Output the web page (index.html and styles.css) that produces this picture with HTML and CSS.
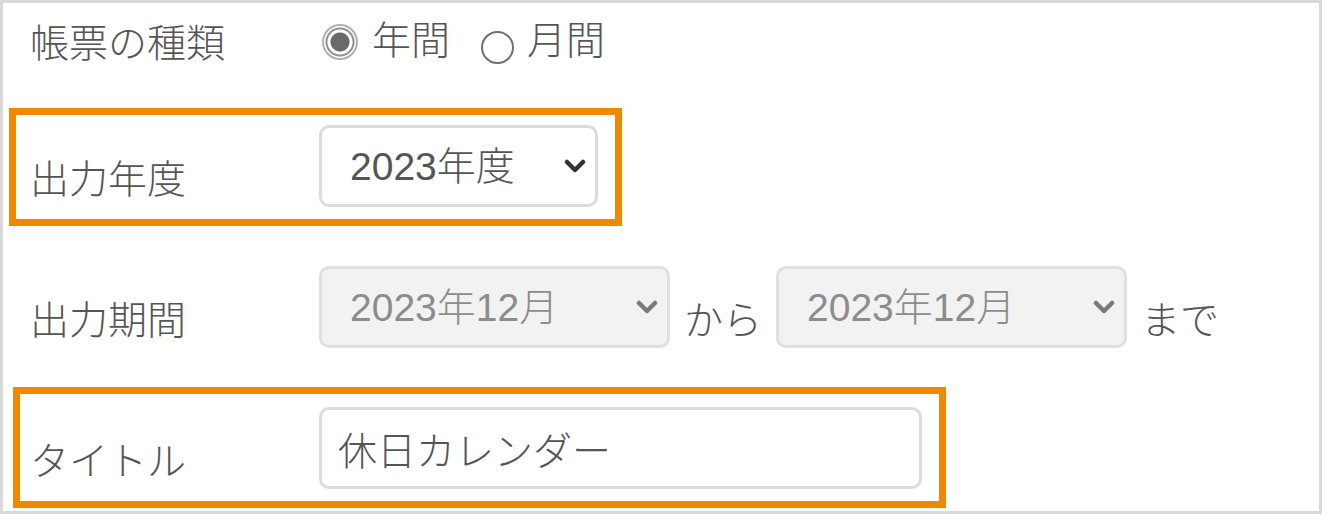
FILE: index.html
```html
<!DOCTYPE html>
<html lang="ja">
<head>
<meta charset="utf-8">
<title>帳票出力</title>
<link rel="stylesheet" href="styles.css">
</head>
<body>
<div class="frame">
  <div class="row row-type">
    <div class="label">帳票の種類</div>
    <div class="radios">
      <label class="radio"><input type="radio" name="kind" checked><span>年間</span></label>
      <label class="radio radio-off"><input type="radio" name="kind"><span>月間</span></label>
    </div>
  </div>

  <div class="row row-year">
    <div class="label">出力年度</div>
    <div class="select select-year">
      <select><option>2023年度</option></select>
      <svg class="chev" viewBox="0 0 22 14" width="22" height="14"><path d="M3 3 L11 11 L19 3"/></svg>
    </div>
  </div>

  <div class="row row-period">
    <div class="label">出力期間</div>
    <div class="select select-month is-disabled">
      <select disabled><option>2023年12月</option></select>
      <svg class="chev" viewBox="0 0 22 14" width="22" height="14"><path d="M3 3 L11 11 L19 3"/></svg>
    </div>
    <span class="word">から</span>
    <div class="select select-month is-disabled">
      <select disabled><option>2023年12月</option></select>
      <svg class="chev" viewBox="0 0 22 14" width="22" height="14"><path d="M3 3 L11 11 L19 3"/></svg>
    </div>
    <span class="word">まで</span>
  </div>

  <div class="row row-title">
    <div class="label">タイトル</div>
    <input class="text-input" type="text" value="休日カレンダー">
  </div>

  <div class="mark mark-year"></div>
  <div class="mark mark-title"></div>
</div>
</body>
</html>
```

FILE: styles.css
```css
html, body {
  margin: 0;
  padding: 0;
  background: #ffffff;
}

body {
  font-family: "Liberation Sans", "Noto Sans CJK JP", sans-serif;
  font-weight: 300;
  color: #555555;
}

.frame {
  position: relative;
  box-sizing: border-box;
  width: 1322px;
  height: 514px;
  border: 3px solid #d9d9d9;
  padding-left: 27px;
  display: flex;
  flex-direction: column;
}

.row {
  display: flex;
  align-items: flex-end;
  height: 82px;
}

.row-type {
  height: 80px;
  align-items: center;
}

.row-year {
  margin-top: 42px;
}

.row-period,
.row-title {
  margin-top: 59px;
}

.label {
  width: 289px;
  flex: none;
  font-size: 39px;
  line-height: 1;
  margin-bottom: 8px;
}

.row-type .label {
  margin-bottom: 0;
}

.word {
  font-size: 39px;
  line-height: 1;
  margin: 0 14px 8px 14px;
}

/* radios */
.radios {
  display: flex;
  align-items: center;
  margin-top: -6px;
}

.radio {
  display: flex;
  align-items: center;
  font-size: 39px;
  line-height: 1;
}

.radio input {
  appearance: none;
  -webkit-appearance: none;
  margin: 0;
  flex: none;
  box-sizing: border-box;
  border-radius: 50%;
}

.radio input:checked {
  width: 36px;
  height: 36px;
  margin: 4px 14px 0 3px;
  border: 2px solid #b0b0b0;
  background: radial-gradient(circle, #6a6a6a 0 9px, #ffffff 10px 12px, #909090 13px 14px, #ffffff 15px);
}

.radio-off {
  margin-left: 31px;
}

.radio-off input {
  width: 33px;
  height: 33px;
  margin: 14px 13px 0 0;
  border: 2px solid #707070;
  background: #ffffff;
}

/* selects */
.select {
  position: relative;
  flex: none;
  height: 82px;
}

.select select {
  appearance: none;
  -webkit-appearance: none;
  box-sizing: border-box;
  width: 100%;
  height: 100%;
  margin: 0;
  padding: 0 0 0 28px;
  border: 3px solid #dcdcdc;
  border-radius: 10px;
  background: #ffffff;
  font-family: "Liberation Sans", "Noto Sans CJK JP", sans-serif;
  font-weight: 300;
  font-size: 39px;
  color: #555555;
  opacity: 1;
}

.select-year {
  width: 279px;
}

.select-month {
  width: 351px;
}

.is-disabled select {
  background: #f2f2f2;
  color: #8c8c8c;
  border-color: #e0e0e0;
}

.chev {
  position: absolute;
  right: 12px;
  top: 34px;
  fill: none;
  stroke: #333333;
  stroke-width: 4.5;
  stroke-linecap: round;
  stroke-linejoin: round;
}

.is-disabled .chev {
  stroke: #7a7a7a;
}

/* text input */
.text-input {
  box-sizing: border-box;
  width: 603px;
  height: 82px;
  margin: 0;
  padding: 0 0 0 16px;
  border: 3px solid #dcdcdc;
  border-radius: 10px;
  font-family: "Liberation Sans", "Noto Sans CJK JP", sans-serif;
  font-weight: 300;
  font-size: 39px;
  color: #555555;
  outline: none;
}

/* annotation highlight boxes */
.mark {
  position: absolute;
  box-sizing: border-box;
  border: 7px solid #ef8700;
  pointer-events: none;
}

.mark-year {
  left: 6px;
  top: 105px;
  width: 613px;
  height: 118px;
}

.mark-title {
  left: 10px;
  top: 384px;
  width: 933px;
  height: 121px;
}
```
